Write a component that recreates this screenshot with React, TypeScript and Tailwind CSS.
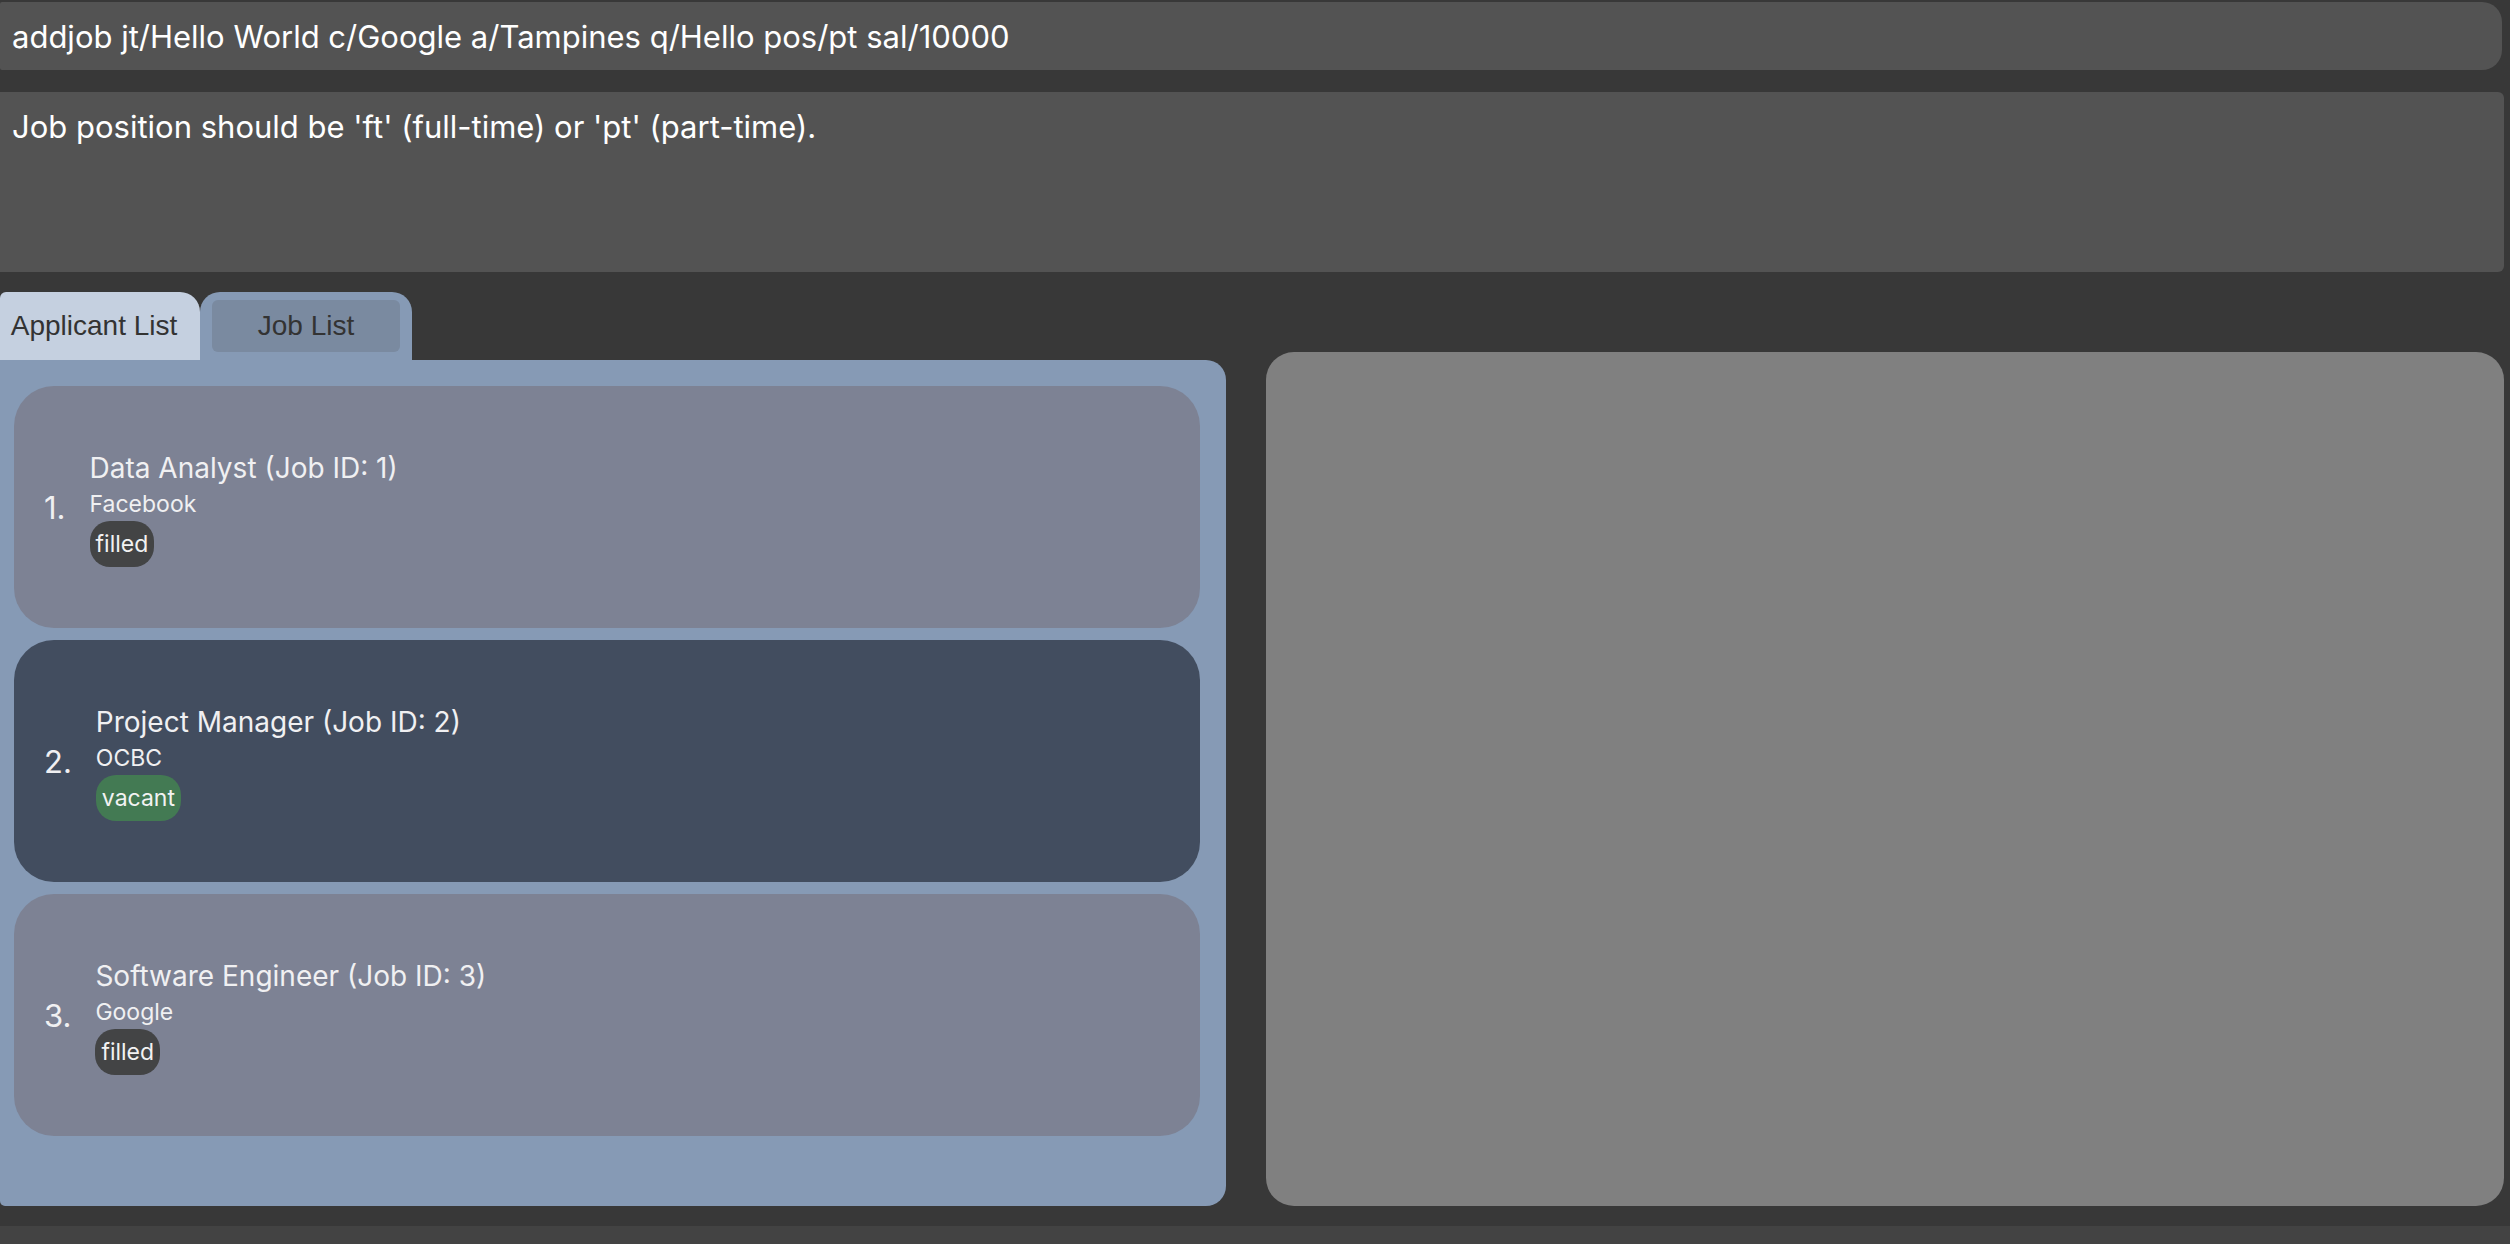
import { useState } from "react";

type Job = { id: number; title: string; company: string; status: "filled" | "vacant" };

const jobs: Job[] = [
  { id: 1, title: "Data Analyst", company: "Facebook", status: "filled" },
  { id: 2, title: "Project Manager", company: "OCBC", status: "vacant" },
  { id: 3, title: "Software Engineer", company: "Google", status: "filled" },
];

function StatusPill({ status }: { status: Job["status"] }) {
  return (
    <span
      className={`rounded-[20px] px-1.5 text-[23px] leading-[46px] text-[#f2f2f2] ${
        status === "filled" ? "bg-[#434445]" : "bg-[#437a53]"
      }`}
    >
      {status}
    </span>
  );
}

function JobCard({ job, index }: { job: Job; index: number }) {
  return (
    <li
      className={`flex h-[242px] items-center gap-6 rounded-[40px] px-[30px] pt-0.5 text-[#f0f0f2] ${
        index % 2 === 0 ? "bg-[#7d8294]" : "bg-[#424d5f]"
      }`}
    >
      <span className="text-[31px] leading-[38px]">{index + 1}.</span>
      <div className="flex flex-col items-start">
        <h2 className="text-[28px] leading-[38px]">
          {job.title} (Job ID: {job.id})
        </h2>
        <p className="text-[23px] leading-[34px]">{job.company}</p>
        <StatusPill status={job.status} />
      </div>
    </li>
  );
}

export default function App() {
  const [command, setCommand] = useState(
    "addjob jt/Hello World c/Google a/Tampines q/Hello pos/pt sal/10000",
  );

  return (
    <main className="flex min-h-screen flex-col bg-[#383838] pt-0.5 font-['Inter',sans-serif]">
      <div className="pr-2">
        <input
          aria-label="Command"
          value={command}
          onChange={(e) => setCommand(e.target.value)}
          className="block h-[68px] w-full rounded-l-[2px] rounded-r-[20px] bg-[#535353] px-3 text-[31px] text-white outline-none"
        />
      </div>
      <div className="mt-[22px] pr-1.5">
        <textarea
          aria-label="Result"
          readOnly
          value="Job position should be 'ft' (full-time) or 'pt' (part-time)."
          className="block h-[180px] w-full resize-none rounded-r-[6px] bg-[#535353] px-3 py-3.5 text-[31px] leading-[42px] text-white outline-none"
        />
      </div>

      <div className="mt-5 grid flex-1 grid-cols-[1226fr_1238fr] gap-10 pr-1.5">
        <section className="flex flex-col">
          <div role="tablist" className="flex h-[68px] font-['Liberation_Sans',sans-serif] text-[28px] text-[#333333]">
            <button
              role="tab"
              aria-selected="false"
              className="w-[200px] rounded-tl-[6px] rounded-tr-[20px] bg-[#c5d0e0] pr-3 text-center whitespace-nowrap"
            >
              Applicant List
            </button>
            <button
              role="tab"
              aria-selected="true"
              className="w-[212px] rounded-t-[20px] bg-[#869ab5] px-3 py-2"
            >
              <span className="block rounded-[6px] bg-[#7a8aa0] leading-[52px]">Job List</span>
            </button>
          </div>
          <div role="tabpanel" className="flex-1 rounded-r-[20px] rounded-bl-[5px] bg-[#869ab5] pt-[26px] pr-[26px] pl-3.5">
            <ul className="flex flex-col gap-3">
              {jobs.map((job, i) => (
                <JobCard key={job.id} job={job} index={i} />
              ))}
            </ul>
          </div>
        </section>
        <section aria-label="Details" className="mt-[60px] rounded-[28px] bg-[#808080]" />
      </div>

      <footer className="mt-5 h-[18px] bg-[#434343]" />
    </main>
  );
}
